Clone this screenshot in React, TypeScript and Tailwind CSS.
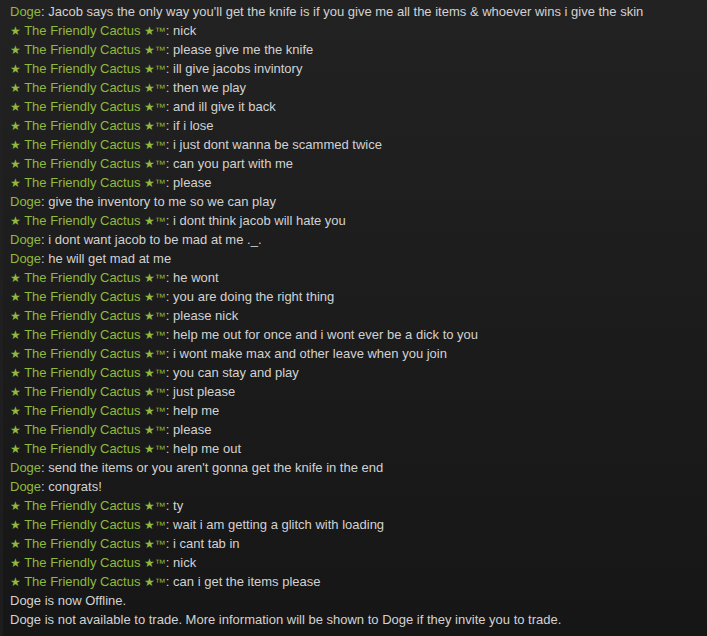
import React from "react";

type Line = { n?: "doge" | "cactus"; t: string };

const lines: Line[] = [
  { n: "doge", t: "Jacob says the only way you'll get the knife is if you give me all the items & whoever wins i give the skin" },
  { n: "cactus", t: "nick" },
  { n: "cactus", t: "please give me the knife" },
  { n: "cactus", t: "ill give jacobs invintory" },
  { n: "cactus", t: "then we play" },
  { n: "cactus", t: "and ill give it back" },
  { n: "cactus", t: "if i lose" },
  { n: "cactus", t: "i just dont wanna be scammed twice" },
  { n: "cactus", t: "can you part with me" },
  { n: "cactus", t: "please" },
  { n: "doge", t: "give the inventory to me so we can play" },
  { n: "cactus", t: "i dont think jacob will hate you" },
  { n: "doge", t: "i dont want jacob to be mad at me ._." },
  { n: "doge", t: "he will get mad at me" },
  { n: "cactus", t: "he wont" },
  { n: "cactus", t: "you are doing the right thing" },
  { n: "cactus", t: "please nick" },
  { n: "cactus", t: "help me out for once and i wont ever be a dick to you" },
  { n: "cactus", t: "i wont make max and other leave when you join" },
  { n: "cactus", t: "you can stay and play" },
  { n: "cactus", t: "just please" },
  { n: "cactus", t: "help me" },
  { n: "cactus", t: "please" },
  { n: "cactus", t: "help me out" },
  { n: "doge", t: "send the items or you aren't gonna get the knife in the end" },
  { n: "doge", t: "congrats!" },
  { n: "cactus", t: "ty" },
  { n: "cactus", t: "wait i am getting a glitch with loading" },
  { n: "cactus", t: "i cant tab in" },
  { n: "cactus", t: "nick" },
  { n: "cactus", t: "can i get the items please" },
  { t: "Doge is now Offline." },
  { t: "Doge is not available to trade. More information will be shown to Doge if they invite you to trade." },
];

function Name({ n }: { n: "doge" | "cactus" }) {
  if (n === "doge") return <span className="text-[#90ba3c]">Doge</span>;
  return (
    <span className="text-[#90ba3c]">
      <span className="text-[12px] leading-[0]">★</span> The Friendly Cactus{" "}
      <span className="text-[12px] leading-[0]">★</span>
      <span className="text-[11px] leading-[0]">™</span>
    </span>
  );
}

export default function App() {
  return (
    <div
      className="w-[707px] h-[636px] overflow-hidden bg-gradient-to-b from-[#222222] to-[#161616] flex"
      style={{ fontFamily: '"Liberation Sans", Arial, "DejaVu Sans", sans-serif' }}
    >
      <div className="w-[3px] shrink-0 bg-gradient-to-b from-[#222222] to-[#1d1d1d]" />
      <div className="flex flex-col pt-[2px] pl-[7px] text-[13px] leading-[19px] text-[#d2d2d2]">
        {lines.map((l, i) => (
          <div key={i} className="whitespace-nowrap h-[19px]">
            {l.n ? (
              <>
                <Name n={l.n} />: {l.t}
              </>
            ) : (
              l.t
            )}
          </div>
        ))}
      </div>
    </div>
  );
}
